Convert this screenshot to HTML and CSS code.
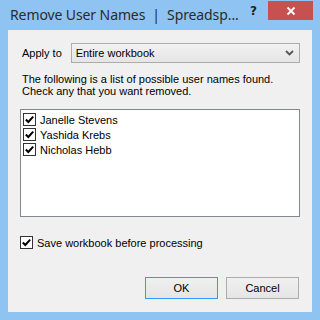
FILE: index.html
```html
<!DOCTYPE html>
<html lang="en">
<head>
  <meta charset="UTF-8" />
  <title>Remove User Names</title>
  <link rel="stylesheet" href="styles.css">
</head>
<body>

  <div class="window">
    <div class="titlebar">
      <span class="title">Remove User Names &nbsp;|&nbsp; Spreadsp...</span>
      <span class="help">?</span>
      <span class="close">
        <svg width="10" height="10" viewBox="0 0 10 10">
          <path d="M1.5 1.5 L8.5 8.5 M8.5 1.5 L1.5 8.5" stroke="#fff" stroke-width="1.8" />
        </svg>
      </span>
    </div>

    <div class="client">
      <div class="apply-row">
        <span class="label">Apply to</span>
        <div class="select">
          <span>Entire workbook</span>
          <svg class="chevron" width="9" height="6" viewBox="0 0 9 6">
            <path d="M1 1 L4.5 4.5 L8 1" stroke="#555" stroke-width="1.8" fill="none" />
          </svg>
        </div>
      </div>

      <p class="intro">The following is a list of possible user names found.<br>Check any that you want removed.</p>

      <div class="listbox">
        <div class="item"><span class="check"><svg width="11" height="11" viewBox="0 0 11 11"><path d="M1.8 5.5 L4.3 8 L9.2 2.6" stroke="#000" stroke-width="2" fill="none" /></svg></span>Janelle Stevens</div>
        <div class="item"><span class="check"><svg width="11" height="11" viewBox="0 0 11 11"><path d="M1.8 5.5 L4.3 8 L9.2 2.6" stroke="#000" stroke-width="2" fill="none" /></svg></span>Yashida Krebs</div>
        <div class="item"><span class="check"><svg width="11" height="11" viewBox="0 0 11 11"><path d="M1.8 5.5 L4.3 8 L9.2 2.6" stroke="#000" stroke-width="2" fill="none" /></svg></span>Nicholas Hebb</div>
      </div>

      <div class="save-row">
        <span class="check"><svg width="11" height="11" viewBox="0 0 11 11"><path d="M1.8 5.5 L4.3 8 L9.2 2.6" stroke="#000" stroke-width="2" fill="none" /></svg></span>
        Save workbook before processing
      </div>

      <div class="buttons">
        <button class="btn btn-default">OK</button>
        <button class="btn">Cancel</button>
      </div>
    </div>
  </div>

</body>
</html>
```

FILE: styles.css
```css
body {
  margin: 0;
  font-family: 'Liberation Sans', Arial, sans-serif;
  font-size: 11px;
  color: #000;
  background-color: #8ec3f2;
}

.window {
  width: 320px;
  height: 320px;
  display: flex;
  flex-direction: column;
}

/* Title bar */
.titlebar {
  height: 30px;
  display: flex;
  align-items: flex-start;
}

.title {
  font-family: 'Noto Sans', sans-serif;
  font-size: 14px;
  color: #2b2b2b;
  margin: 5px 0 0 10px;
  white-space: nowrap;
  letter-spacing: -0.1px;
}

.help {
  font-family: 'DejaVu Sans', sans-serif;
  font-weight: bold;
  font-size: 12px;
  color: #222;
  margin: 4px 0 0 auto;
  width: 14px;
}

.close {
  width: 45px;
  height: 19px;
  margin: 1px 7px 0 4px;
  background-color: #c75050;
  display: flex;
  align-items: center;
  justify-content: center;
}

/* Dialog body */
.client {
  flex: 1;
  margin: 0 8px 8px;
  background-color: #f0f0f0;
  padding: 13px 12px 0;
  display: flex;
  flex-direction: column;
}

.apply-row {
  display: flex;
  align-items: center;
}

.label {
  margin-left: 2px;
  width: 49px;
}

.select {
  width: 225px;
  height: 18px;
  border: 1px solid #acacac;
  background: linear-gradient(to bottom, #f2f2f2, #e5e5e5);
  display: flex;
  align-items: center;
  padding-left: 4px;
}

.chevron {
  margin-left: auto;
  margin-right: 5px;
}

.intro {
  margin: 10px 0 0 2px;
  line-height: 12px;
}

.listbox {
  margin-top: 12px;
  height: 108px;
  border: 1px solid #828790;
  background-color: #fff;
  padding-top: 2px;
  box-sizing: border-box;
}

.item {
  display: flex;
  align-items: center;
  height: 15px;
  padding-left: 2px;
}

.check {
  width: 11px;
  height: 11px;
  border: 1px solid #333;
  background-color: #fff;
  margin-right: 4px;
  display: inline-flex;
}

.save-row {
  display: flex;
  align-items: center;
  margin-top: 19px;
}

.buttons {
  margin-top: auto;
  margin-bottom: 13px;
  display: flex;
  justify-content: flex-end;
  gap: 8px;
  padding-right: 1px;
}

.btn {
  width: 73px;
  height: 22px;
  font-family: 'Liberation Sans', Arial, sans-serif;
  font-size: 11px;
  color: #000;
  border: 1px solid #acacac;
  background: linear-gradient(to bottom, #f0f0f0, #e5e5e5);
  padding: 0;
}

.btn-default {
  border-color: #3399ff;
}
```
